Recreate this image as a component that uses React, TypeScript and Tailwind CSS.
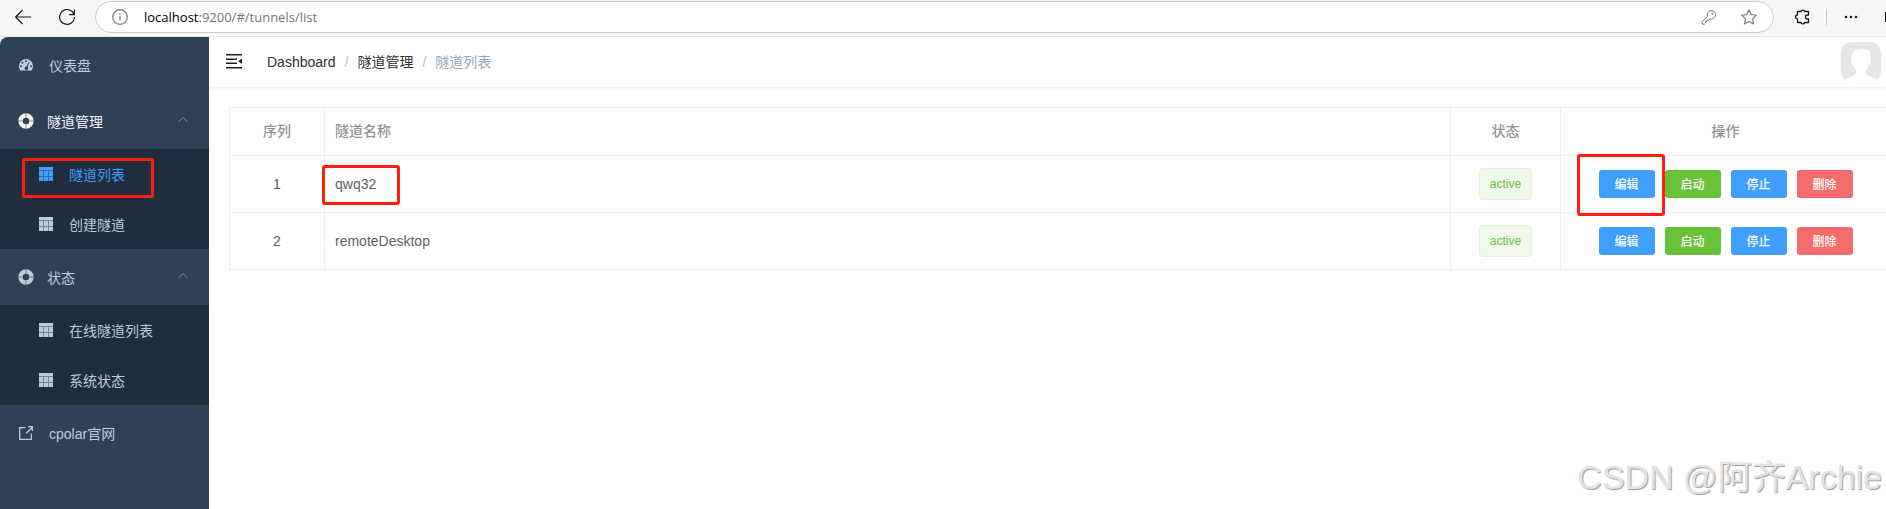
import type { ReactNode } from 'react';

const tunnels = [
  { id: 1, name: 'qwq32', status: 'active' },
  { id: 2, name: 'remoteDesktop', status: 'active' },
];

const actions = [
  { label: '编辑', color: 'bg-[#409eff]' },
  { label: '启动', color: 'bg-[#67c23a]' },
  { label: '停止', color: 'bg-[#409eff]' },
  { label: '删除', color: 'bg-[#f56c6c]' },
];

function Highlight({ className }: { className: string }) {
  return <span className={`pointer-events-none absolute z-10 rounded-[3px] border-3 border-[#ff1e10] ${className}`} />;
}

function GaugeIcon() {
  return (
    <svg className="h-[14px] w-[14px]" viewBox="0 0 14 14" fill="currentColor">
      <path
        fillRule="evenodd"
        d="M7 1a7 7 0 0 0-7 7c0 1.700.5 3.200 1.300 4.500h11.400A8 8 0 0 0 14 8a7 7 0 0 0-7-7zM7 2.200a1 1 0 1 1 0 2 1 1 0 0 1 0-2zM3.400 3.700a1 1 0 1 1 0 2 1 1 0 0 1 0-2zM2 7.200a1 1 0 1 1 0 2 1 1 0 0 1 0-2zM12 7.200a1 1 0 1 1 0 2 1 1 0 0 1 0-2zM9.600 4l1 .5-2 4.300a1.800 1.800 0 1 1-1.100-.4z"
      />
    </svg>
  );
}

function BuoyIcon() {
  return (
    <svg className="h-4 w-4" viewBox="0 0 16 16" fill="none">
      <circle cx="8" cy="8" r="5.500" stroke="currentColor" strokeWidth="4.400" />
      <path d="M8 .2v4.400M8 11.400v4.400M.2 8h4.400M11.400 8h4.400" stroke="#304156" strokeWidth=".8" opacity=".7" />
    </svg>
  );
}

function GridIcon() {
  return (
    <svg className="h-[14px] w-[14px]" viewBox="0 0 14 14" fill="currentColor">
      <path d="M0 0h14v3H0zM0 4h4v5H0zM5 4h4v5H5zM10 4h4v5h-4zM0 10h4v4H0zM5 10h4v4H5zM10 10h4v4h-4z" />
      <path d="M0 3h14v1H0zM0 9h14v1H0zM4 4h1v10H4zM9 4h1v10H9z" opacity=".55" />
    </svg>
  );
}

function LinkIcon() {
  return (
    <svg className="h-[14px] w-[14px]" viewBox="0 0 14 14" fill="none" stroke="currentColor" strokeWidth="1.300">
      <path d="M6.500 1.700H.7v11.600h11.600V7.500M7 7.500l6-6M9 .7h4.300V5" />
    </svg>
  );
}

function ChevronUp() {
  return (
    <svg className="h-3 w-3" viewBox="0 0 12 12" fill="none" stroke="#8492a2" strokeWidth="1">
      <path d="M1.500 7 6 2.500 10.500 7" />
    </svg>
  );
}

function MenuItem({ icon, label }: { icon: ReactNode; label: string }) {
  return (
    <a href="#" className="flex h-14 items-center gap-4 px-[19px] text-[#bfcbd9]">
      {icon}
      <span className="pt-0.5">{label}</span>
    </a>
  );
}

function SubMenu({ label, titleColor, children }: { label: string; titleColor: string; children: ReactNode }) {
  return (
    <div>
      <button className={`flex h-14 w-full items-center gap-[13px] pr-5 pl-[18px] ${titleColor}`}>
        <BuoyIcon />
        <span className="flex-1 pt-0.5 text-left">{label}</span>
        <ChevronUp />
      </button>
      <div className="bg-[#1f2d3d]">{children}</div>
    </div>
  );
}

function SubItem({ label, active = false }: { label: string; active?: boolean }) {
  return (
    <a
      href="#"
      className={`relative flex h-[50px] items-center gap-4 pl-[39px] ${active ? 'text-[#409eff]' : 'text-[#bfcbd9]'}`}
    >
      <GridIcon />
      <span className="pt-0.5">{label}</span>
      {active && <Highlight className="top-[9px] left-[22px] h-10 w-[132px]" />}
    </a>
  );
}

function BrowserBar() {
  return (
    <div className="flex h-[37px] items-start overflow-hidden border-b border-[#e5e5e5] bg-[#f7f7f7] pt-px text-[#1b1b1b]">
      <div className="flex h-8 w-[95px] shrink-0 items-center gap-7 pl-[15px]">
        <button aria-label="Back">
          <svg className="h-4 w-4" viewBox="0 0 16 16" fill="none" stroke="currentColor" strokeWidth="1.200">
            <path d="M16 8H.8M7.500 1 .7 8l6.800 7" />
          </svg>
        </button>
        <button aria-label="Refresh">
          <svg className="h-4 w-4" viewBox="0 0 16 16" fill="none" stroke="currentColor" strokeWidth="1.200">
            <path d="M15 5.500A7.400 7.400 0 1 0 15.400 8M15.400.5v5.200h-5.200" />
          </svg>
        </button>
      </div>
      <div className="flex h-8 flex-1 items-center rounded-full border border-[#cdcdcd] bg-white pr-4 pl-4">
        <svg className="mr-4 h-4 w-4" viewBox="0 0 16 16" fill="none" stroke="#767676" strokeWidth="1.200">
          <circle cx="8" cy="8" r="7.300" />
          <path d="M8 7v4.500M8 4.300v1.400" />
        </svg>
        <div className="flex-1 font-['Open_Sans','Noto_Sans',sans-serif] text-[13px] text-[#767676]">
          <span className="text-black">localhost</span>:9200/#/tunnels/list
        </div>
        <svg className="mr-6 h-4 w-4" viewBox="0 0 16 16" fill="none" stroke="#767676" strokeWidth="1">
          <path d="M10 1.700a4.200 4.200 0 1 1-1.300 8L7.500 11H6v1.500H4.500V14L3.300 15.200H1.200v-2.500L6.500 7.300A4.200 4.200 0 0 1 10 1.700z" />
          <circle cx="11.300" cy="4.700" r=".6" />
        </svg>
        <svg className="h-4 w-4" viewBox="0 0 16 16" fill="none" stroke="#767676" strokeWidth="1.100" strokeLinejoin="round">
          <path d="m8 .8 2.200 4.700 5.200.7-3.800 3.600.9 5.200L8 12.500 3.500 15l.9-5.200L.6 6.200l5.200-.7z" />
        </svg>
      </div>
      <div className="flex h-8 w-[112px] shrink-0 items-center pl-5">
        <svg className="h-4 w-4 shrink-0" viewBox="0 0 16 16" fill="none" stroke="currentColor" strokeWidth="1.300" strokeLinejoin="round">
          <path d="M3.500 2.500H7a1.900 1.900 0 0 1 3.700 0h3.800V6h-1a2 2 0 0 0 0 4h1v3.500h-3.800a1.900 1.900 0 0 1-3.700 0H3.500V10a2 2 0 0 1 0-4z" />
        </svg>
        <span className="ml-4 h-4 w-px bg-[#c8c8c8]" />
        <svg className="ml-4 h-4 w-4 shrink-0" viewBox="0 0 16 16" fill="currentColor">
          <circle cx="3" cy="8" r="1.300" />
          <circle cx="8" cy="8" r="1.300" />
          <circle cx="13" cy="8" r="1.300" />
        </svg>
        <span className="ml-auto h-[10px] w-px bg-black" />
      </div>
    </div>
  );
}

function Header() {
  return (
    <header className="flex h-[50px] items-center bg-white pr-[5px] pl-[17px] shadow-[0_1px_4px_rgba(0,21,41,0.08)]">
      <button aria-label="Toggle sidebar" className="mr-[25px]">
        <svg className="h-4 w-4" viewBox="0 0 16 16" fill="#222">
          <path d="M0 0h16v1.500H0zM0 4.500h11V6H0zM0 8.500h11V10H0zM0 13h16v1.500H0zM16 4.500v5.500L12.200 7.200z" />
        </svg>
      </button>
      <nav className="flex flex-1 items-center gap-[9px] text-[#303133]">
        <a href="#">Dashboard</a>
        <span className="text-[#c0c4cc]">/</span>
        <a href="#">隧道管理</a>
        <span className="text-[#c0c4cc]">/</span>
        <span className="text-[#97a8be]">隧道列表</span>
      </nav>
      <svg className="h-10 w-10 rounded-[10px]" viewBox="0 0 40 40">
        <path d="M0 0h40v40H0z" fill="#e6e6e6" />
        <path
          d="M20 7c2 0 3-.5 5 .5l2 .5c2 1.500 2.500 4 2.500 7v3c.8.200.8 1.200.4 2.500s-1 2-1.600 2c-.6 2.500-2.300 4.500-3.300 6v2.500c1.500 3.500 7 4 11 6.500L33 40H7l-3-2.500c4-2.500 9.500-3 11-6.500v-2.500c-1-1.500-2.700-3.500-3.300-6-.6 0-1.200-.7-1.600-2s-.4-2.300.4-2.500v-3c0-5 4-8 9.500-8z"
          fill="#fff"
        />
      </svg>
    </header>
  );
}

function TunnelTable() {
  return (
    <table className="w-[calc(100%+5px)] table-fixed border-collapse text-[#606266]">
      <thead>
        <tr className="h-12 text-[#909399] [&>th]:border [&>th]:border-[#ebeef5] [&>th]:p-0 [&>th]:pb-0.5 [&>th]:font-medium">
          <th className="w-[95px]">序列</th>
          <th className="text-left">
            <span className="pl-[10px]">隧道名称</span>
          </th>
          <th className="w-[110px]">状态</th>
          <th className="w-[330px]">操作</th>
        </tr>
      </thead>
      <tbody>
        {tunnels.map((tunnel, index) => (
          <tr key={tunnel.id} className="h-[57px] [&>td]:border [&>td]:border-[#ebeef5] [&>td]:p-0">
            <td className="text-center">{tunnel.id}</td>
            <td className="relative">
              <span className="pl-[10px]">{tunnel.name}</span>
              {index === 0 && <Highlight className="top-[9px] -left-[3px] h-10 w-[78px]" />}
            </td>
            <td className="text-center">
              <span className="inline-block h-8 rounded border border-[#e1f3d8] bg-[#f0f9eb] px-[10px] align-middle text-xs leading-[30px] text-[#67c23a]">
                {tunnel.status}
              </span>
            </td>
            <td className="relative">
              <div className="flex justify-center gap-[10px]">
                {actions.map(action => (
                  <button
                    key={action.label}
                    className={`h-7 w-14 rounded-[3px] pt-0.5 text-xs font-medium text-white ${action.color}`}
                  >
                    {action.label}
                  </button>
                ))}
              </div>
              {index === 0 && <Highlight className="-top-[2px] left-4 h-[62px] w-[88px]" />}
            </td>
          </tr>
        ))}
      </tbody>
    </table>
  );
}

export default function App() {
  return (
    <div className="relative flex min-h-screen flex-col overflow-hidden bg-white font-['Liberation_Sans','Noto_Sans_CJK_SC',sans-serif] text-sm">
      <BrowserBar />
      <div className="flex flex-1 bg-[#f7f7f7]">
        <aside className="w-[209px] shrink-0 rounded-tl-lg bg-[#304156]">
          <MenuItem icon={<GaugeIcon />} label="仪表盘" />
          <SubMenu label="隧道管理" titleColor="text-[#f4f4f5]">
            <SubItem label="隧道列表" active />
            <SubItem label="创建隧道" />
          </SubMenu>
          <SubMenu label="状态" titleColor="text-[#bfcbd9]">
            <SubItem label="在线隧道列表" />
            <SubItem label="系统状态" />
          </SubMenu>
          <MenuItem icon={<LinkIcon />} label="cpolar官网" />
        </aside>
        <div className="min-w-0 flex-1 overflow-hidden bg-white">
          <Header />
          <main className="pt-5 pl-5">
            <TunnelTable />
          </main>
        </div>
      </div>
      <div className="absolute right-1 bottom-2 text-[34px] leading-12 text-[#e3e3e3] [text-shadow:1px_1px_1px_#999]">
        CSDN @阿齐Archie
      </div>
    </div>
  );
}
